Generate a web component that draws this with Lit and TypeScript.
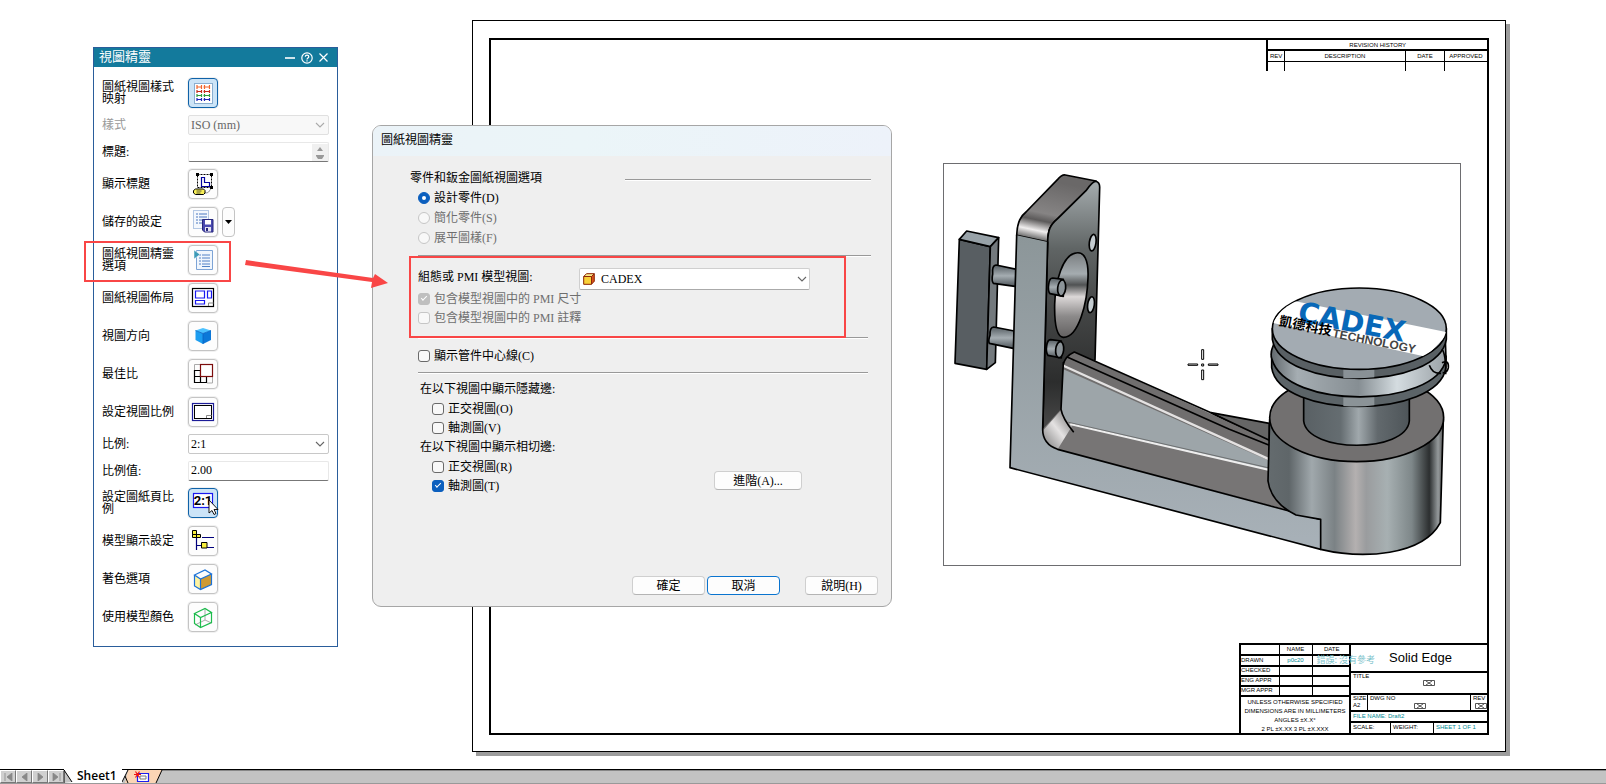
import { LitElement, html, svg, css, nothing } from "lit";
import { customElement, property } from "lit/decorators.js";

const base = css`
  *, *::before, *::after { box-sizing: border-box; }
  button, input, select { font: inherit; color: inherit; margin: 0; }
`;

const chevron = html`<svg class="chev" viewBox="0 0 10 6" width="10" height="6" aria-hidden="true">
  <path d="M1 1L5 5L9 1" fill="none" stroke="currentColor" stroke-width="1.1"/></svg>`;

const icons: Record<string, unknown> = {
  styles: svg`<rect x="3.5" y="2.5" width="18" height="20" fill="#fff" stroke="#8aaed0"/>
    <g fill="none" stroke-width="1.2">
    <path stroke="#f0642c" d="M6 4v4M6 6h5M10.500 4v4M12.500 6h6M13.500 4v4M18.500 4v4"/>
    <path stroke="#c42b1c" d="M6 9v3M6 10.500h5M10.500 9v3M12.500 10.500h6M13.500 9v3M18.500 9v3"/>
    <path stroke="#2f9a3c" d="M6 13v3M6 14.500h5M10.500 13v3M12.500 14.500h6M13.500 13v3M18.500 13v3"/>
    <path stroke="#1d23b8" d="M6 17v3M6 18.500h5M10.500 17v3M12.500 18.500h6M13.500 17v3M18.500 17v3"/></g>`,
  caption: svg`<rect x="6.500" y="2.500" width="14" height="13" fill="none" stroke="#000" stroke-dasharray="2 1"/>
    <path d="M5 1h3v3H5zM19 1h3v3h-3zM19 14h3v3h-3z" fill="#000"/>
    <path d="M10.500 5.500h3v5h5v4h-8z" fill="#fff" stroke="#00009c" stroke-width="1.2"/>
    <path d="M14 21c5 0 4-3 6-4" fill="none" stroke="#888"/>
    <path d="M2.500 18.500l2-1.500h8l1.500 1.500v2.500l-1.500 1.500h-8l-2-1.500z" fill="#f7ee55" stroke="#000"/>
    <path d="M5.500 19h5M5.500 21h4" stroke="#333" stroke-width=".8"/>`,
  saved: svg`<rect x="2.500" y=".5" width="15" height="18" fill="#f4f8fd" stroke="#b4c8e4"/>
    <path d="M5 4h2M8 4h8M5 7h2M8 7h8M5 10h2M8 10h4M5 13h2M8 13h3" stroke="#4a78c0" fill="none"/>
    <path d="M11.500 9.500h10.500v12.500h-8.500l-2-2z" fill="#4a4ab0" stroke="#26267c"/>
    <rect x="14" y="10" width="6" height="4.500" fill="#fff"/><rect x="14" y="17" width="6" height="4.500" fill="#e4e4f0"/>
    <rect x="15" y="18" width="2" height="3" fill="#26267c"/>`,
  options: svg`<path d="M5.500 2.500h16v19h-16z" fill="#f0f6fd" stroke="#7da4d6"/>
    <path d="M8 7h2M11 7h8M8 10h2M11 10h8M8 13h2M11 13h8M8 16h2M11 16h8M11 18.500h8" stroke="#2a66b8" stroke-width=".8" fill="none"/>
    <path d="M3 2l6 4.500L3 11z" fill="#3c9ab8" stroke="#fff" stroke-width=".5"/>`,
  layout: svg`<rect x="1.500" y="2.500" width="21" height="18" fill="#fff" stroke="#000" stroke-width="1.200"/>
    <path d="M4.500 5h9v7h-9zM16.500 5h4v7h-4zM4.500 14.500h9v3.500h-9z" fill="#fff" stroke="#1818f0" stroke-width="1.200"/>
    <path d="M17.500 20v-3h5" fill="none" stroke="#888"/>`,
  cube: svg`<path d="M4.500 6.500L12 9.500v10.500L4.500 16z" fill="#1c9df0"/><path d="M12 9.500l8-3V16l-8 4z" fill="#0c78d8"/>
    <path d="M4.500 6.500L12 4l8 2.500-8 3z" fill="#4cc2ff"/><path d="M4.500 6.500L12 9.500l8-3M12 9.500v10.500" fill="none" stroke="#0a5fc0" stroke-width=".8"/>`,
  best: svg`<path d="M3.500 8V2.500H9M21.500 15v6H16" fill="none" stroke="#aaa"/>
    <path d="M3.500 8.500h6v12h-6zM3.500 14.500h12v6h-12z" fill="none" stroke="#000" stroke-width="1.200"/>
    <rect x="9.500" y="2.500" width="12" height="12" fill="#fff" stroke="#7c0c0c" stroke-width="1.200"/>`,
  scale: svg`<rect x="1.500" y="3.500" width="21" height="17" fill="#fff" stroke="#1c1c98" stroke-width="1.200"/>
    <rect x="3.500" y="5.500" width="17" height="13" fill="#fff" stroke="#000"/><path d="M15.500 18v-2.500h5" fill="none" stroke="#888"/>`,
  ratio: svg`<rect x="2.500" y="2.500" width="19" height="14" fill="#fff" stroke="#1818f0" stroke-width="1.200"/>
    <text x="12" y="14" text-anchor="middle" font-family="Roboto, sans-serif" font-weight="700" font-size="13">2:1</text>
    <path d="M18 9v13l3-2.500 2 4 2-1-2-4h4z" fill="#fff" stroke="#000" stroke-width=".9"/>`,
  tree: svg`<path d="M5.500 8v13M6 16.500h4M11 8.500h12M16 18.500h7" fill="none" stroke="#00007c" stroke-width="1.200"/>
    <path d="M1.500 1.500h4v4h-4zM1.500 5.500h4v3h-4zM5.500 5.500h4v3h-4zM10.500 13.500h5.500v5.500h-5.500z" fill="#f7ee3c" stroke="#000"/>`,
  shade: svg`<path d="M3.500 8L9.500 12V22.500L3.500 19z" fill="#fff3a0"/><path d="M9.500 12l11-5v10.500l-11 5z" fill="#cf9a34"/>
    <path d="M3.500 8l10.500-5 6.500 4-11 5zM3.500 8v11l6 3.500 11-5V7M9.500 12v10.500" fill="none" stroke="#1c72d8" stroke-width="1.200"/>`,
  wire: svg`<path d="M14 4v11L4 20M14 15l6.500 3" fill="none" stroke="#aaa"/>
    <path d="M3.500 8.500l10.500-5 6.500 4-11 5zM3.500 8.500v10l6 4 11-5v-10M9.500 12.500v10" fill="none" stroke="#1cbc4c" stroke-width="1.200"/>`,
};

@customElement("view-wizard")
class ViewWizard extends LitElement {
  static styles = [base, css`
    :host { display: block; background: #fff; border: 1px solid #2a5d9b; color: #000;
      font: 12px/12px "Liberation Serif", "Noto Sans CJK TC", serif; }
    .bar { display: flex; align-items: center; height: 19px; padding: 0 9px 0 5px; gap: 6px; background: #137a9c; color: #fff;
      font: 13px/16px "Noto Sans CJK TC", sans-serif; }
    .bar h2 { flex: 1; margin: 0; padding-bottom: 3px; font: inherit; }
    .bar button { display: flex; padding: 0; border: 0; background: none; }
    .rows { padding: 7px 8px 10px; }
    .row { display: flex; align-items: center; min-height: 38px; }
    .row.field { min-height: 26px; }
    .row.entry { min-height: 27px; }
    .row > label, .row > .name { width: 86px; padding-right: 10px; }
    .dim { color: #999; }
    .tool { display: flex; align-items: center; justify-content: center; width: 30px; height: 30px; padding: 0;
      border: 1px solid #c4c4c4; border-radius: 4px; background: #fdfdfd; box-shadow: 0 0 0 1px #f1f1f1; }
    .tool.on { border-color: #0f62a8; background: #cce4f7; }
    .tool svg { overflow: visible; }
    .drop { width: 13px; height: 30px; margin-left: 4px; padding: 0; border: 1px solid #c4c4c4; border-radius: 4px; background: #fdfdfd;
      display: flex; align-items: center; justify-content: center; }
    .box { flex: 1; display: flex; align-items: center; position: relative; color: #000; }
    .box select, .box input { width: 100%; height: 20px; padding: 0 2px; appearance: none; border: 1px solid #c8c8c8; border-radius: 2px;
      background: #fff; font-size: 12px; line-height: 18px; opacity: 1; outline: 0; }
    .box input { border-color: #e8e8e8; border-bottom-color: #777; }
    .box select:disabled { background: #f8f8f8; border-color: #e0e0e0; color: #666; }
    .chev { position: absolute; right: 4px; color: #666; pointer-events: none; }
    select:disabled + .chev { color: #aaa; }
    .spin { position: absolute; right: 1px; top: 2px; background: #f0f0f0; }
  `];
  private tool(label: string, icon: string, on = false) {
    return html`<div class="row"><span class="name" id=${icon}>${label}</span>
      <button class="tool ${on ? "on" : ""}" aria-labelledby=${icon}><svg viewBox="0 0 24 24" width="24" height="24" aria-hidden="true">${icons[icon]}</svg></button>
      ${icon === "saved" ? html`<button class="drop" aria-label="儲存的設定"><svg width="7" height="4" viewBox="0 0 7 4"><path d="M0 0h7L3.500 4z"/></svg></button>` : nothing}
    </div>`;
  }
  render() {
    return html`
      <div class="bar"><h2>視圖精靈</h2>
        <button aria-label="最小化"><svg width="10" height="12" viewBox="0 0 10 12"><path d="M0 6h10" stroke="#fff" stroke-width="1.600"/></svg></button>
        <button aria-label="說明"><svg width="12" height="12" viewBox="0 0 12 12" fill="none" stroke="#fff" stroke-width="1.200"><circle cx="6" cy="6" r="5.200"/><path d="M4.300 4.700c0-2.200 3.500-2.200 3.500 0C7.800 6 6 6 6 7.400M6 8.300v1.200"/></svg></button>
        <button aria-label="關閉"><svg width="9" height="9" viewBox="0 0 9 9"><path d="M.5.5l8 8M8.500.5l-8 8" stroke="#fff" stroke-width="1.200"/></svg></button>
      </div>
      <div class="rows">
        ${this.tool("圖紙視圖樣式映射", "styles", true)}
        <div class="row field"><label class="dim" for="style">樣式</label><div class="box"><select id="style" disabled><option>ISO (mm)</option></select>${chevron}</div></div>
        <div class="row field entry"><label for="title">標題:</label><div class="box"><input id="title" type="text">
          <svg class="spin" width="16" height="17" viewBox="0 0 16 17"><path d="M5 7l3-4 3 4zM4 11h8v1l-2 3H6l-2-3z" fill="#999"/></svg></div></div>
        ${this.tool("顯示標題", "caption")}
        ${this.tool("儲存的設定", "saved")}
        ${this.tool("圖紙視圖精靈選項", "options")}
        ${this.tool("圖紙視圖佈局", "layout")}
        ${this.tool("視圖方向", "cube")}
        ${this.tool("最佳比", "best")}
        ${this.tool("設定視圖比例", "scale")}
        <div class="row field"><label for="ratio-list">比例:</label><div class="box"><select id="ratio-list"><option>2:1</option></select>${chevron}</div></div>
        <div class="row field entry"><label for="value">比例值:</label><div class="box"><input id="value" type="text" value="2.00"></div></div>
        ${this.tool("設定圖紙頁比例", "ratio", true)}
        ${this.tool("模型顯示設定", "tree")}
        ${this.tool("著色選項", "shade")}
        ${this.tool("使用模型顏色", "wire")}
      </div>`;
  }
}

@customElement("wizard-dialog")
class WizardDialog extends LitElement {
  static styles = [base, css`
    :host { display: flex; flex-direction: column; background: #efefef; border: 1px solid #a6a6a6; border-radius: 9px; overflow: hidden; color: #000;
      font: 12px/18px "Liberation Serif", "Noto Sans CJK TC", serif; }
    h2 { margin: 0; height: 30px; padding-left: 8px; font: inherit; line-height: 28px; background: linear-gradient(90deg, #ebf3f8, #ebf5f8 40%, #edf2fa); }
    .body { padding: 12px 20px 0 45px; }
    fieldset { margin: 0; padding: 0; border: 0; min-width: 0; }
    fieldset + fieldset { margin-top: 1px; }
    legend { padding: 0; }
    .head { display: flex; align-items: center; height: 20px; margin-left: -8px; }
    .head .rule { width: 246px; margin: 4px 0 0 auto; }
    .rule { height: 2px; background: #999; border-bottom: 1px solid #fff; }
    .opt { display: flex; align-items: center; gap: 4px; height: 19px; }
    .opt.r { height: 20px; }
    .opt input { appearance: none; width: 12px; height: 12px; border: 1px solid #6a6a6a; border-radius: 3px; background: #f8f8f8;
      display: grid; place-content: center; flex: none; }
    .opt input[type="radio"] { border-radius: 50%; }
    .opt input:disabled { border-color: #c6c6c6; }
    .opt input:checked { background: #0b5fbe; border-color: #0b5fbe; }
    .opt input:checked:disabled { background: #bfbfbf; border-color: #bfbfbf; }
    .opt input[type="radio"]:checked::before { content: ""; width: 4px; height: 4px; border-radius: 50%; background: #fff; }
    .opt input[type="checkbox"]:checked::before { content: ""; width: 6px; height: 3px; border: 1px solid #fff; border-width: 0 0 1px 1px; transform: rotate(-45deg); margin-bottom: 2px; }
    .off { color: #6e6e6e; }
    .kinds { padding-bottom: 7px; }
    .config { padding: 11px 0 10px; }
    .pick { display: flex; align-items: center; height: 21px; }
    .pick label { width: 161px; line-height: 16px; padding-bottom: 4px; }
    .combo { position: relative; display: flex; align-items: center; width: 231px; }
    .combo select { appearance: none; width: 100%; height: 22px; padding: 0 0 0 21px; border: 1px solid #cfcfcf; border-bottom-color: #aaa; border-radius: 2px; background: #fff; }
    .combo .part { position: absolute; left: 4px; }
    .combo .chev { position: absolute; right: 3px; color: #666; pointer-events: none; }
    .rule.near { margin-right: 3px; }
    .center { padding: 7px 0; }
    .edges { display: flex; align-items: flex-end; justify-content: space-between; padding: 6px 69px 0 2px; }
    .edges .opt { padding-left: 12px; }
    .edges legend { line-height: 19px; }
    button { height: 19px; padding: 0; border: 1px solid #cfcfcf; border-bottom-color: #b4b4b4; border-radius: 4px; background: #fdfdfd; line-height: 16px; width: 73px; }
    button.wide { width: 88px; margin-bottom: 5px; }
    button.focus { border-color: #0a74cf; }
    .foot { display: flex; justify-content: flex-end; gap: 2px; padding: 81px 13px 11px; }
    .foot .help { margin-left: 23px; }
  `];
  private opt(type: string, label: string, checked = false, disabled = false) {
    return html`<label class="opt ${type === "radio" ? "r" : ""} ${disabled ? "off" : ""}"><input type=${type} name=${type === "radio" ? "kind" : nothing} ?checked=${checked} ?disabled=${disabled}>${label}</label>`;
  }
  render() {
    return html`<h2>圖紙視圖精靈</h2>
      <div class="body">
        <div class="head"><span>零件和鈑金圖紙視圖選項</span><div class="rule"></div></div>
        <div class="kinds" role="radiogroup" aria-label="零件和鈑金圖紙視圖選項">
        ${this.opt("radio", "設計零件(D)", true)}${this.opt("radio", "簡化零件(S)", false, true)}${this.opt("radio", "展平圖樣(F)", false, true)}</div>
        <div class="rule"></div>
        <div class="config">
          <div class="pick"><label for="config">組態或 PMI 模型視圖:</label>
            <div class="combo"><select id="config"><option>CADEX</option></select>
              <svg class="part" width="12" height="12" viewBox="0 0 12 12"><path d="M.7 3.500L3.500.7h7.800v7.500L8.500 11.300H.7z" fill="#d8521c"/><path d="M.7 3.500h7.800v7.800H.7z" fill="#f8d038"/><path d="M.7 3.500L3.500.7h7.800L8.500 3.500z" fill="#fbe98c"/><path d="M.7 3.500h7.800v7.800H.7zM.7 3.500L3.500.7h7.800L8.500 3.500M11.300.7v7.500l-2.800 3.100" fill="none" stroke="#8c2808" stroke-width="1"/></svg>
              ${chevron}</div></div>
          ${this.opt("checkbox", "包含模型視圖中的 PMI 尺寸", true, true)}
          ${this.opt("checkbox", "包含模型視圖中的 PMI 註釋", false, true)}
        </div>
        <div class="rule near"></div>
        <div class="center">${this.opt("checkbox", "顯示管件中心線(C)")}</div>
        <div class="rule near"></div>
        <div class="edges"><div>
          <fieldset><legend>在以下視圖中顯示隱藏邊:</legend>${this.opt("checkbox", "正交視圖(O)")}${this.opt("checkbox", "軸測圖(V)")}</fieldset>
          <fieldset><legend>在以下視圖中顯示相切邊:</legend>${this.opt("checkbox", "正交視圖(R)")}${this.opt("checkbox", "軸測圖(T)", true)}</fieldset></div>
          <button class="wide">進階(A)...</button></div>
      </div>
      <div class="foot"><button>確定</button><button class="focus">取消</button><button class="help">說明(H)</button></div>`;
  }
}

@customElement("model-view")
class ModelView extends LitElement {
  static styles = css`:host { display: block; border: 1px solid #6d6d70; } svg { display: block; width: 100%; height: auto; }`;
  render() {
    return html`<svg viewBox="44 44 1548 1204" role="img" aria-label="CADEX">
      <defs>
        <linearGradient id="side" x1="0" y1="0" x2="0" y2="1"><stop offset="0" stop-color="#a5acae"/><stop offset=".25" stop-color="#606565"/><stop offset=".45" stop-color="#474949"/><stop offset=".75" stop-color="#2c2d2d"/><stop offset="1" stop-color="#565656"/></linearGradient>
        <linearGradient id="front" x1="0" y1="0" x2="0" y2="1"><stop offset="0" stop-color="#8c9699"/><stop offset="1" stop-color="#a8b1b8"/></linearGradient>
        <linearGradient id="top" gradientUnits="userSpaceOnUse" x1="345" y1="90" x2="308" y2="268"><stop offset="0" stop-color="#6a6868"/><stop offset=".55" stop-color="#868484"/><stop offset=".68" stop-color="#5c5a5a"/><stop offset=".85" stop-color="#f0eeee"/><stop offset="1" stop-color="#666"/></linearGradient>
        <linearGradient id="bore" x1="0" y1="0" x2="0" y2="1"><stop offset="0" stop-color="#7a7e80"/><stop offset=".25" stop-color="#a5acb0"/><stop offset=".38" stop-color="#505253"/><stop offset=".52" stop-color="#dcd8d8"/><stop offset=".75" stop-color="#8c8a8a"/><stop offset="1" stop-color="#636161"/></linearGradient>
        <linearGradient id="rod" x1="0" y1="0" x2="0" y2="1"><stop offset="0" stop-color="#555d62"/><stop offset=".5" stop-color="#a5adb2"/><stop offset="1" stop-color="#4a5156"/></linearGradient>
        <linearGradient id="cyl"><stop offset="0" stop-color="#646b6e"/><stop offset=".12" stop-color="#5f6669"/><stop offset=".25" stop-color="#a0a8ac"/><stop offset=".38" stop-color="#7b8285"/><stop offset=".5" stop-color="#b4b0b0"/><stop offset=".56" stop-color="#9a9c9e"/><stop offset=".68" stop-color="#a7b0b2"/><stop offset=".82" stop-color="#7e8789"/><stop offset=".92" stop-color="#2c2f30"/><stop offset=".97" stop-color="#94999b"/><stop offset="1" stop-color="#555"/></linearGradient>
        <linearGradient id="shaft"><stop offset="0" stop-color="#596064"/><stop offset=".35" stop-color="#656d71"/><stop offset=".52" stop-color="#a0a8ac"/><stop offset=".7" stop-color="#62696d"/><stop offset="1" stop-color="#4e5559"/></linearGradient>
        <linearGradient id="groove"><stop offset="0" stop-color="#62696d"/><stop offset=".15" stop-color="#a5adb2"/><stop offset=".5" stop-color="#868e93"/><stop offset=".72" stop-color="#d4dce0"/><stop offset="1" stop-color="#9ba2a7"/></linearGradient>
        <linearGradient id="fillet" x1="0" y1="1" x2="1" y2="0"><stop offset="0" stop-color="#777"/><stop offset=".5" stop-color="#e4e2e2"/><stop offset="1" stop-color="#666"/></linearGradient>
        <clipPath id="disc"><ellipse cx="600" cy="208" rx="260" ry="121"/></clipPath>
      </defs>
      <g stroke="#000" stroke-width="5" stroke-linejoin="round" stroke-linecap="round">
        <path d="M90 270L183 292L172 660L77 642z" fill="#585e62"/>
        <path d="M90 270L112 245L208 265L183 292z" fill="#98a2a8"/>
        <path d="M183 292L208 265L198 640L172 660z" fill="#73797d"/>
        <path d="M190 374C188 355 192 348 200 347L262 360V412L192 402Q186 395 190 374z" fill="url(#rod)"/>
        <path d="M182 558C181 540 185 534 193 533L255 545V598L180 582Q176 575 182 558z" fill="url(#rod)"/>
        <path d="M845 790L1020 822V880z" fill="#666"/>
        <path d="M262 258C264 215 275 200 290 188L385 90Q398 75 408 77L500 95L385 208C362 228 356 240 355 278z" fill="url(#top)"/>
        <path d="M355 278C356 240 362 228 385 208L470 124Q490 95 500 96Q512 100 511 116L497 632L435 700L400 900L340 850z" fill="url(#side)"/>
        <path d="M262 258L355 278L340 840Q340 885 385 900L1174 1110V1200L242 955z" fill="url(#front)" stroke="none"/>
        <path d="M340 840Q340 885 385 900L1105 1090L1020 960L425 820Q396 805 395 780z" fill="#777575" stroke="none"/>
        <path d="M340 845L395 783Q400 806 432 824L385 900Q342 885 340 845z" fill="url(#fillet)" stroke="none"/>
        <path d="M402 650L1020 935V962L425 822Q396 806 395 780z" fill="#9da5a9" stroke="none"/>
        <path d="M402 660Q400 622 435 608L1020 873V935z" fill="#706e6e" stroke="none"/>
        <path d="M404 650L1020 930" stroke="#e4e2e2" stroke-width="7"/>
        <path d="M425 825L1020 962" stroke="#eee" stroke-width="6"/>
        <path d="M418 819L1020 956" stroke="#555" stroke-width="2"/>
        <path d="M402 645Q408 620 435 608L845 790L1020 873M415 624L900 840L1020 888M402 640L395 780Q400 808 432 847M355 278L340 840Q340 885 385 900L1174 1110M262 258L242 955L1174 1200" fill="none"/>
        <path d="M435 312C466 302 478 335 476 385C474 460 448 565 402 564C380 562 375 520 376 465C378 390 402 320 435 312z" fill="url(#bore)"/>
        <ellipse cx="490" cy="280" rx="10" ry="25" transform="rotate(8 490 280)" fill="#c4ccd0"/>
        <ellipse cx="485" cy="466" rx="10" ry="24" transform="rotate(8 485 466)" fill="#c4ccd0"/>
        <g><path d="M358 405Q360 386 370 386L402 390V441L362 433Q355 425 358 405z" fill="url(#rod)"/><ellipse cx="397" cy="416" rx="12" ry="24" fill="#8c9499" transform="rotate(6 397 416)"/></g>
        <g transform="translate(-6 185)"><path d="M358 405Q360 386 370 386L402 390V441L362 433Q355 425 358 405z" fill="url(#rod)"/><ellipse cx="397" cy="416" rx="12" ry="24" fill="#8c9499" transform="rotate(6 397 416)"/></g>
      </g>
      <g transform="translate(690 330)" stroke="#000" stroke-width="5" stroke-linejoin="round">
        <path d="M331 480L326 665Q335 730 410 767L484 780V870C610 900 790 890 843 790L852 480z" fill="url(#cyl)"/>
        <ellipse cx="592" cy="475" rx="261" ry="132" fill="#727070"/>
        <path d="M433 380V485C445 582 740 582 750 485V380z" fill="url(#shaft)"/>
        <path d="M337 290V325C360 480 835 480 860 325V290z" fill="#5c6468"/>
        <path d="M552 380H645V438Q600 444 552 440z" fill="#8b9397" stroke="none"/>
        <path d="M343 255C334 275 334 290 338 300C380 452 830 448 860 300L858 240z" fill="url(#groove)"/>
        <path d="M339 208V240C365 396 835 396 861 240V208z" fill="#596064"/>
        <path d="M552 330H645V354Q600 359 552 356z" fill="#899196" stroke="none"/>
        <ellipse cx="600" cy="208" rx="261" ry="122" fill="#a3abb2"/>
        <path d="M810 318Q820 345 845 342M848 270Q860 285 859 345M848 310Q869 300 867 325Q864 342 850 340" fill="none"/>
        <g clip-path="url(#disc)" stroke="none"><path d="M390 122L870 220L800 292L338 190z" fill="#fff"/>
          <text transform="translate(412 186) rotate(11)" fill="#0868b8" font-family="DejaVu Sans, sans-serif" font-weight="700" font-size="86">CADEX</text>
          <g transform="translate(358 196) rotate(11)">
            <text x="0" y="2" font-family="Noto Sans CJK TC, sans-serif" font-weight="700" font-size="40">凱德科技</text>
            <text x="164" y="6" fill="#444" font-family="Liberation Sans, sans-serif" font-weight="700" font-size="36">TECHNOLOGY</text>
          </g></g>
        <g fill="#fff" stroke-width="3"><path d="M127 271h6v29h-6zM127 332h6v29h-6zM86 314h29v4h-29zM147 314h29v4h-29zM127 314h6v6h-6z"/></g>
      </g>
    </svg>`;
  }
}

@customElement("drawing-sheet")
class DrawingSheet extends LitElement {
  @property() file = "Draft2";
  static styles = [base, css`
    :host { display: flex; background: #fff; border: 1px solid #000; padding: 17px 16px 16px 16px; box-shadow: 4px 4px 0 #9c9c9c;
      font: 6px/8px "Liberation Sans", sans-serif; color: #000; }
    .frame { flex: 1; display: flex; flex-direction: column; align-items: flex-end; justify-content: space-between; border: 2px solid #000; }
    table { border-collapse: collapse; table-layout: fixed; }
    th, td { padding: 0; border: 1px solid #000; font-weight: 400; text-align: center; white-space: nowrap; }
    .rev { width: 220px; margin: -2px -1px 0 0; }
    .rev th { height: 11px; border-width: 2px 1px; }
    .rev tr:last-child td { height: 10px; border-bottom: 0; }
    .rev tr > :first-child { border-left-width: 2px; }
    .rev tr + tr th { border-bottom-width: 1px; }
    model-view { width: min(518px, 55%); margin: 15px 26px 0 0; }
    .title { display: flex; width: 249px; margin: 0 -1px -1px 0; border-top: 2px solid #000; border-left: 2px solid #000; }
    .people { width: 110px; }
    .people th, .people td { height: 10px; border-width: 2px; border-left-width: 1px; border-right-width: 1px; line-height: 7px; overflow: visible; }
    .people tr > :first-child { text-align: left; border-left: 0; }
    .people tr > :last-child { border-right: 0; }
    .people tr:first-child > * { border-top: 0; }
    .left { width: 110px; border-right: 2px solid #000; }
    .left p { margin: 1px 0 0; text-align: center; line-height: 9px; white-space: nowrap; }
    .teal { color: #008a94; }
    .err { position: relative; z-index: 1; font-family: "Noto Sans CJK TC", sans-serif; font-size: 9px; color: #7fc4cc; }
    td.over { overflow: visible; text-align: left; padding-left: 4px; }
    .right { flex: 1; display: grid; grid-template-rows: 28px 22px 17px 11px 11px; line-height: 9px; }
    .right > div { display: flex; border-bottom: 2px solid #000; padding-left: 2px; position: relative; overflow: visible; }
    .right > div:last-child { border-bottom: 0; }
    .right .brand { align-items: center; justify-content: center; font: 13px/20px "Liberation Sans", sans-serif; }
    .right > .split { padding-left: 0; }
    .split > div { border-right: 1px solid #000; padding-left: 2px; }
    .split > div:last-child { border-right: 0; }
    .w1 { width: 17px; } .w2 { flex: 1; } .w3 { width: 17px; } .w4 { width: 40px; } .w5 { width: 43px; }
    .right .tiny { line-height: 7px; }
    .ref { display: block; margin: auto; }
    .mid .ref { margin: 1px auto 0; }
  `];
  render() {
    const ref = html`<svg class="ref" width="12" height="6" viewBox="0 0 12 6" aria-hidden="true"><path d="M.5.5h11v5H.5zM3 1l6 4M9 1L3 5" fill="none" stroke="#555"/></svg>`;
    return html`<div class="frame">
      <table class="rev"><colgroup><col width="17"><col width="121"><col width="39"><col width="43"></colgroup>
        <tr><th colspan="4">REVISION HISTORY</th></tr>
        <tr><th>REV</th><th>DESCRIPTION</th><th>DATE</th><th>APPROVED</th></tr>
        <tr><td></td><td></td><td></td><td></td></tr></table>
      <model-view></model-view>
      <div class="title">
        <div class="left">
          <table class="people"><colgroup><col width="38"><col width="33"><col width="39"></colgroup>
            <tr><td></td><th>NAME</th><th>DATE</th></tr>
            <tr><th>DRAWN</th><td class="teal">p0c20</td><td class="over"><span class="err">錯誤: 沒有參考</span></td></tr>
            <tr><th>CHECKED</th><td></td><td></td></tr>
            <tr><th>ENG APPR</th><td></td><td></td></tr>
            <tr><th>MGR APPR</th><td></td><td></td></tr></table>
          <p>UNLESS OTHERWISE SPECIFIED<br>DIMENSIONS ARE IN MILLIMETERS<br>ANGLES ±X.X°<br>2 PL ±X.XX 3 PL ±X.XXX</p>
        </div>
        <div class="right">
          <div class="brand">Solid Edge</div>
          <div class="tiny">TITLE${ref}</div>
          <div class="split tiny"><div class="w1">SIZE<br>A2</div><div class="w2">DWG NO<div class="mid">${ref}</div></div><div class="w3">REV<div class="mid">${ref}</div></div></div>
          <div class="teal">FILE NAME: ${this.file}</div>
          <div class="split"><div class="w4">SCALE:</div><div class="w5">WEIGHT:</div><div class="w2 teal">SHEET 1 OF 1</div></div>
        </div>
      </div></div>`;
  }
}

@customElement("app-root")
class AppRoot extends LitElement {
  static styles = [base, css`
    :host { display: flex; flex-direction: column; min-height: 100vh; background: #fff; }
    .desk { position: relative; flex: 1; display: flex; padding: 20px 100px 17px 472px; }
    drawing-sheet { flex: 1; }
    view-wizard { position: absolute; left: 93px; top: 47px; width: 245px; }
    wizard-dialog { position: absolute; left: 372px; top: 125px; width: 520px; }
    .marks { position: absolute; left: 0; top: 0; pointer-events: none; }
    .tabs { display: flex; height: 15px; background: #c3c3c3; border-top: 1px solid #000; border-bottom: 1px solid #999; box-shadow: inset 0 1px 0 #888;
      font: 700 12px/14px "Open Sans", sans-serif; }
    .tabs button { padding: 0; border: 0; background: none; display: flex; }
    .tabs .nav { width: 16px; align-items: center; justify-content: center; border: 1px solid #777; border-left-color: #fff; border-top-color: #fff; background: #d0d0d0; }
    .tabs .sheet { align-items: center; background: #fff; margin-top: -1px; font: 600 12px/14px "Open Sans", sans-serif; color: #000; }
    .tabs .sheet span { padding: 0 5px 0 3px; }
  `];
  render() {
    const nav = ["M2 0v8M9 0v8L4 4z", "M8 0v8L3 4z", "M3 0v8l5-4z", "M9 0v8M2 0v8l5-4z"];
    return html`
      <main class="desk">
        <drawing-sheet></drawing-sheet>
        <view-wizard></view-wizard>
        <wizard-dialog></wizard-dialog>
        <svg class="marks" width="900" height="350" viewBox="0 0 900 350" aria-hidden="true">
          <g fill="none" stroke="#f94646" stroke-width="2"><rect x="85" y="242" width="145" height="39"/><rect x="410" y="257" width="435" height="80"/></g>
          <path d="M246 260L373 278L375 274L388 283L371 288L372 282L245 265z" fill="#f94646"/>
        </svg>
      </main>
      <nav class="tabs">
        ${nav.map((d, i) => html`<button class="nav" aria-label=${["第一頁", "上一頁", "下一頁", "最後一頁"][i]}><svg width="11" height="8" viewBox="0 0 11 8"><path d=${d} fill="#888" stroke="#888" stroke-width=".8"/></svg></button>`)}
        <button class="sheet"><svg width="10" height="14" viewBox="0 0 10 14"><path d="M0 14V1l8 12" fill="#c3c3c3" stroke="#000"/></svg><span>Sheet1</span></button>
        <button aria-label="新增圖頁"><svg width="42" height="14" viewBox="0 0 42 14"><path d="M0 0h6L0 13z" fill="#fff"/><path d="M6 0h34l-6 13H3z" fill="#fbd5b5"/><path d="M0 12L6 0M3 6l3 7M34 13L40 0" fill="none" stroke="#000"/><path d="M15.500 3.500h11v8h-11z" fill="#fff" stroke="#1c1cf0" stroke-width="1.200"/><path d="M18 6h6v3h-6z" fill="none" stroke="#777"/><path d="M12 4.500h7M13.500 1.500l4 6M17.500 1.500l-4 6" stroke="#f01010" stroke-width="1.200"/></svg></button>
      </nav>`;
  }
}
